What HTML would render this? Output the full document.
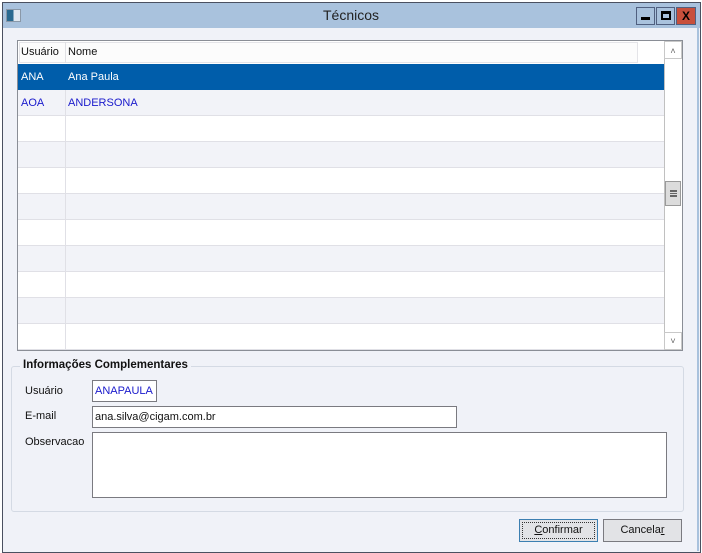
<!DOCTYPE html><html><head><style>
*{margin:0;padding:0;box-sizing:border-box}
body{width:702px;height:553px;background:#fff;position:relative;overflow:hidden;font-family:"Liberation Sans",sans-serif;font-size:11px}
.a{position:absolute}
</style></head><body>
<div class="a" style="left:2px;top:2px;width:699px;height:551px;border:1px solid #4a5060;background:#f0f2f8"></div>
<div class="a" style="left:3px;top:3px;width:697px;height:25px;background:#a9c2dd"></div>
<div class="a" style="left:6px;top:9px;width:15px;height:13px;border:1px solid #8a98a8;background:linear-gradient(90deg,#2a6a90 50%,#e0e8f0 50%)"></div>
<div class="a" style="left:0;top:7px;width:702px;text-align:center;font-size:14px;color:#222">Técnicos</div>
<div class="a" style="left:636px;top:7px;width:19px;height:18px;border:1px solid #506080;background:#a9c2dd"><div class="a" style="left:4px;top:9px;width:9px;height:3px;background:#000"></div></div>
<div class="a" style="left:656px;top:7px;width:19px;height:18px;border:1px solid #506080;background:#a9c2dd"><div class="a" style="left:4px;top:3px;width:10px;height:9px;border:2px solid #000;border-top-width:3px"></div></div>
<div class="a" style="left:676px;top:7px;width:20px;height:18px;border:1px solid #506080;background:#c8503c;color:#000;font-weight:bold;font-size:12px;text-align:center;line-height:16px">X</div>
<div class="a" style="left:697px;top:28px;width:2px;height:523px;background:#a9c2dd"></div>

<div class="a" style="left:17px;top:40px;width:666px;height:311px;border:1px solid #8a8e96;background:#fff;overflow:hidden">
<div class="a" style="left:1px;top:1px;width:619px;height:21px;border:1px solid #e4e4e8;background:#fcfcfc"></div>
<div class="a" style="left:3px;top:5px;color:#111">Usuário</div>
<div class="a" style="left:47px;top:1px;width:1px;height:21px;background:#e0e0e4"></div>
<div class="a" style="left:50px;top:5px;color:#111">Nome</div>
<div class="a" style="left:0;top:23px;width:646px;height:26px;background:#005daa"></div>
<div class="a" style="left:3px;top:30px;color:#fff">ANA</div><div class="a" style="left:50px;top:30px;color:#fff">Ana Paula</div>
<div class="a" style="left:0;top:49px;width:646px;height:260px;background:repeating-linear-gradient(180deg,#f2f3f8 0,#f2f3f8 25px,#e0e0e6 25px,#e0e0e6 26px,#fff 26px,#fff 51px,#e0e0e6 51px,#e0e0e6 52px)"></div>
<div class="a" style="left:47px;top:49px;width:1px;height:260px;background:#e0e0e6"></div>
<div class="a" style="left:3px;top:56px;color:#1a1acc">AOA</div><div class="a" style="left:50px;top:56px;color:#1a1acc">ANDERSONA</div>
<div class="a" style="left:646px;top:0;width:18px;height:309px;border-left:1px solid #c0c0c0;background:#fff"></div>
<div class="a" style="left:646px;top:0;width:18px;height:18px;border:1px solid #c8c8c8;color:#666;text-align:center;font-size:9px;line-height:18px">&#x2C4;</div>
<div class="a" style="left:646px;top:291px;width:18px;height:18px;border:1px solid #c8c8c8;color:#666;text-align:center;font-size:9px;line-height:16px">&#x2C5;</div>
<div class="a" style="left:647px;top:140px;width:16px;height:25px;border:1px solid #9a9a9a;background:#dcdcdc"><div class="a" style="left:4px;top:8px;width:7px;height:7px;border-top:2px solid #666;border-bottom:2px solid #666"><div style="margin-top:1px;height:1px;background:#666"></div></div></div>
</div>

<div class="a" style="left:11px;top:366px;width:497px;height:1px"></div>
<div class="a" style="left:11px;top:366px;width:673px;height:146px;border:1px solid #d4dae4;border-radius:3px"></div>
<div class="a" style="left:20px;top:359px;padding:0 3px;background:#f0f2f8;font-weight:bold;font-size:11.5px;color:#111">Informações Complementares</div>
<div class="a" style="left:25px;top:385px;color:#111">Usuário</div>
<div class="a" style="left:92px;top:380px;width:65px;height:22px;border:1px solid #7a7a80;background:#fff;color:#1a1acc;padding:4px 0 0 2px">ANAPAULA</div>
<div class="a" style="left:25px;top:410px;color:#111">E-mail</div>
<div class="a" style="left:92px;top:406px;width:365px;height:22px;border:1px solid #7a7a80;background:#fff;color:#111;padding:4px 0 0 2px">ana.silva@cigam.com.br</div>
<div class="a" style="left:25px;top:436px;color:#111">Observacao</div>
<div class="a" style="left:92px;top:432px;width:575px;height:66px;border:1px solid #7a7a80;background:#fff"></div>
<div class="a" style="left:519px;top:519px;width:79px;height:23px;border:1px solid #3c7fb1;background:#e2e3e6;text-align:center;line-height:20px;color:#111"><div style="border:1px dotted #333;margin:2px;line-height:15px"><u>C</u>onfirmar</div></div>
<div class="a" style="left:603px;top:519px;width:79px;height:23px;border:1px solid #7a7a80;background:#e2e3e6;text-align:center;line-height:21px;color:#111">Cancela<u>r</u></div>
</body></html>
